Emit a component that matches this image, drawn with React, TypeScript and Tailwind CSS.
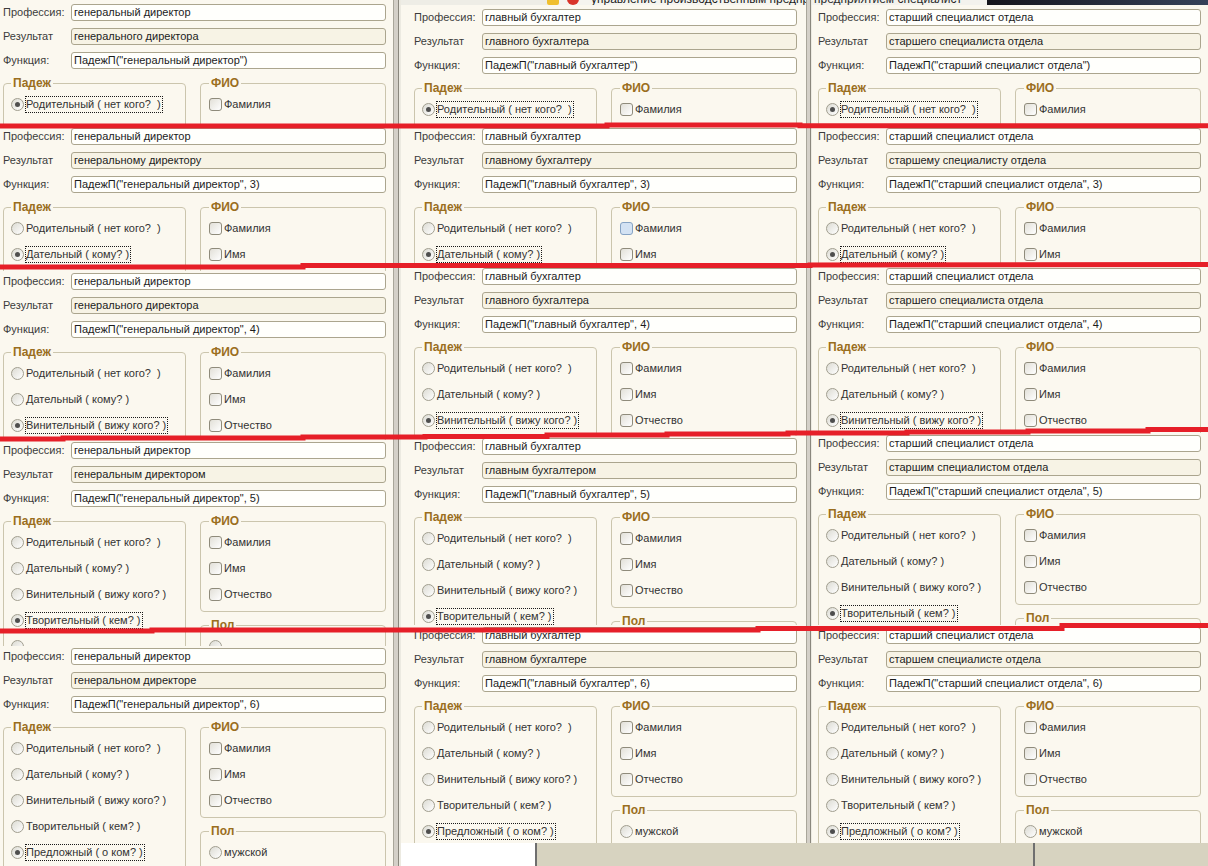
import React from 'react';

const CASES = [
  'Родительный ( нет кого?\u00a0 )',
  'Дательный ( кому? )',
  'Винительный ( вижу кого? )',
  'Творительный ( кем? )',
  'Предложный ( о ком? )',
];

const FIO = ['Фамилия', 'Имя', 'Отчество'];

type Snap = { res: string; h: string; hover?: boolean; peek?: boolean };
type Column = { prof: string; snaps: Snap[] };

const COLS: Column[] = [
  {
    prof: 'генеральный директор',
    snaps: [
      { res: 'генерального директора', h: 'h-[126px]' },
      { res: 'генеральному директору', h: 'h-[145px]' },
      { res: 'генерального директора', h: 'h-[169px]' },
      { res: 'генеральным директором', h: 'h-[206px]', peek: true },
      { res: 'генеральном директоре', h: 'h-[220px]' },
    ],
  },
  {
    prof: 'главный бухгалтер',
    snaps: [
      { res: 'главного бухгалтера', h: 'h-[121px]' },
      { res: 'главному бухгалтеру', h: 'h-[140px]', hover: true },
      { res: 'главного бухгалтера', h: 'h-[170px]' },
      { res: 'главным бухгалтером', h: 'h-[189px]' },
      { res: 'главном бухгалтере', h: 'h-[218px]' },
    ],
  },
  {
    prof: 'старший специалист отдела',
    snaps: [
      { res: 'старшего специалиста отдела', h: 'h-[121px]' },
      { res: 'старшему специалисту отдела', h: 'h-[140px]' },
      { res: 'старшего специалиста отдела', h: 'h-[167px]' },
      { res: 'старшим специалистом отдела', h: 'h-[192px]' },
      { res: 'старшем специалисте отдела', h: 'h-[218px]' },
    ],
  },
];

const fn = (prof: string, i: number) =>
  i === 0 ? `ПадежП("${prof}")` : `ПадежП("${prof}", ${i + 2})`;

function Field({ label, value, ro }: { label: string; value: string; ro?: boolean }) {
  return (
    <div className="flex h-[17px] items-center">
      <span className="w-[68px] shrink-0 text-[#3c3c3c]">{label}</span>
      <div
        className={`flex h-[17px] min-w-0 flex-1 items-center overflow-hidden whitespace-nowrap rounded-[3px] border border-[#aba58e] pl-[2px] text-[#1c1c1c] ${
          ro ? 'bg-[#f7f3e5]' : 'bg-[#fffffc]'
        }`}
      >
        {value}
      </div>
    </div>
  );
}

function Circle({ on }: { on?: boolean }) {
  return (
    <span className="flex h-[13px] w-[13px] shrink-0 items-center justify-center rounded-full border border-[#a19e8f] bg-linear-to-br from-[#dcdbd3] to-white">
      {on && <span className="h-[5px] w-[5px] rounded-full bg-[#4e4e4e]" />}
    </span>
  );
}

function Radio({ label, on }: { label?: string; on?: boolean }) {
  return (
    <div className="flex h-[26px] items-center">
      <Circle on={on} />
      {label && (
        <span
          className={`ml-[1px] whitespace-nowrap border border-dotted pr-[1px] leading-[15px] ${
            on ? 'border-[#1a1a1a]' : 'border-transparent'
          }`}
        >
          {label}
        </span>
      )}
    </div>
  );
}

function Check({ label, hover }: { label: string; hover?: boolean }) {
  return (
    <div className="flex h-[26px] items-center">
      <span
        className={`h-[13px] w-[13px] shrink-0 rounded-[3px] border ${
          hover ? 'border-[#86a3c4] bg-[#d3e2f3]' : 'border-[#8f8b7b] bg-linear-to-br from-[#e2e0d8] to-white'
        }`}
      />
      <span className="ml-[2px] whitespace-nowrap">{label}</span>
    </div>
  );
}

function Blank() {
  return <div className="h-[26px]" />;
}

function Group({ title, className, children }: { title: string; className: string; children: React.ReactNode }) {
  return (
    <fieldset className={`rounded-[4px] border border-[#cbc5ad] ${className}`}>
      <legend className="px-[2px] text-[12px] font-bold leading-[14px] text-[#9a6e1e]">{title}</legend>
      {children}
    </fieldset>
  );
}

// only the rows that show inside a snapshot are written out; the rest stays as empty space
function Form({ prof, res, func, sel, hover, peek }: { prof: string; res: string; func: string; sel: number; hover?: boolean; peek?: boolean }) {
  const checks = Math.min(sel + 1, 3);
  return (
    <div className="w-[390px] shrink-0 pl-[3px] pr-[4px] pt-[4px]">
      <div className="flex flex-col gap-[7px]">
        <Field label="Профессия:" value={prof} />
        <Field label="Результат" value={res} ro />
        <Field label="Функция:" value={func} />
      </div>
      <div className="mt-[7px] flex items-start gap-[14px]">
        <Group title="Падеж" className="w-[183px] pb-[40px] pl-[7px] pt-[1px]">
          {CASES.map((c, i) =>
            i <= sel ? <Radio key={c} label={c} on={i === sel} /> : i === sel + 1 && peek ? <Radio key={c} /> : <Blank key={c} />
          )}
        </Group>
        <div className="flex flex-col gap-[6px]">
          <Group title="ФИО" className="w-[186px] pb-[4px] pl-[8px] pt-[1px]">
            {FIO.map((f, i) => (i < checks ? <Check key={f} label={f} hover={hover && i === 0} /> : <Blank key={f} />))}
          </Group>
          {sel >= 3 && (
            <Group title="Пол" className="w-[186px] pb-[30px] pl-[8px] pt-[1px]">
              {sel === 4 ? <Radio label="мужской" /> : peek ? <Radio /> : <Blank />}
            </Group>
          )}
        </div>
      </div>
    </div>
  );
}

function Snaps({ col, pad }: { col: Column; pad: string }) {
  return (
    <>
      {col.snaps.map((s, i) => (
        <div key={i} className={`flex shrink-0 overflow-hidden bg-[#fbf8ef] ${s.h} ${pad}`}>
          <div className={i === 0 ? '' : '-mt-[2px]'}>
            <Form prof={col.prof} res={s.res} func={fn(col.prof, i)} sel={i} hover={s.hover} peek={s.peek} />
          </div>
        </div>
      ))}
    </>
  );
}

function Frame({ wide }: { wide?: boolean }) {
  return (
    <div className="flex h-full shrink-0">
      <div className="w-[1px] bg-[#a9a69a]" />
      <div className={`${wide ? 'w-[4px]' : 'w-[3px]'} bg-[#d4d0c8]`} />
      <div className="w-[1px] bg-[#8a877d]" />
      <div className={`${wide ? 'w-[2px]' : 'w-[1px]'} bg-[#eceae1]`} />
    </div>
  );
}

export default function App() {
  return (
    <div className="relative flex h-[866px] w-[1208px] overflow-hidden bg-[#fbf8ef] font-['Liberation_Sans',Arial,sans-serif] text-[11px] text-[#333]">
      {/* column 1 */}
      <div className="flex w-[393px] shrink-0 flex-col">
        <Snaps col={COLS[0]} pad="pr-[3px]" />
      </div>

      {/* column 2 */}
      <div className="flex h-full w-[413px] shrink-0">
        <Frame wide />
        <div className="flex w-[405px] flex-col">
          <div className="flex h-[5px] shrink-0 overflow-hidden">
            <div className="w-[146px] shrink-0 bg-[#eeede6]" />
            <div className="flex min-w-0 flex-1 items-end gap-[8px] overflow-hidden bg-[#f5f4ef]">
              <span className="h-[12px] w-[12px] shrink-0 rounded-[2px] bg-[#f0bf2e]" />
              <span className="h-[12px] w-[12px] shrink-0 rounded-full bg-[#d9342a]" />
              <span className="mb-[-2px] whitespace-nowrap pl-[4px] text-[12px] leading-[15px] text-[#1d1d1d]">
                управление производственным предпр
              </span>
            </div>
          </div>
          <Snaps col={COLS[1]} pad="pl-[10px]" />
          <div className="flex h-[23px] shrink-0">
            <div className="w-[134px] bg-white" />
            <div className="w-[2px] bg-[#6f6f6f]" />
            <div className="flex-1 bg-[#d7d3c0]" />
          </div>
        </div>
      </div>

      {/* column 3 */}
      <div className="flex w-[402px] shrink-0 flex-col">
        <div className="flex h-[843px] shrink-0">
          <Frame />
          <div className="flex w-[396px] flex-col">
            <div className="flex h-[5px] shrink-0 overflow-hidden">
              <div className="flex w-[175px] shrink-0 items-end overflow-hidden bg-[#f3f2ed]">
                <span className="mb-[-2px] whitespace-nowrap pl-[2px] text-[12px] leading-[15px] text-[#2a2a2a]">
                  предприятием специалист
                </span>
              </div>
              <div className="flex-1 bg-linear-to-r from-[#15151c] to-[#35425a]" />
            </div>
            <Snaps col={COLS[2]} pad="pl-[3px]" />
          </div>
        </div>
        <div className="flex h-[23px] shrink-0 bg-[#d7d3c0]">
          <div className="w-[227px]" />
          <div className="w-[2px] bg-[#6f6f6f]" />
        </div>
      </div>

      {/* red marker lines drawn over the collage */}
      <svg className="pointer-events-none absolute left-0 top-0" width={1208} height={866}>
        <g fill="none" stroke="#e61f28" strokeWidth={5}>
          <polyline points="0,126 607,126 607,125 800,125 800,125.8 1208,125.8" />
          <polyline points="0,267 303,267 303,265.5 810,265.5 810,265 1208,264.5" />
          <polyline points="0,439 63,439 63,438 303,438 303,437 425,437 425,436.5 547,436.5 547,435 667,435 667,434 788,434 788,433 907,433 907,432 1028,432 1028,431 1148,431 1148,429.5 1208,429.5" />
          <polyline points="0,631 152,631 152,630 400,630 758,630 758,628.5 1062,628.5 1062,625.5 1208,625.5" />
        </g>
      </svg>
    </div>
  );
}
